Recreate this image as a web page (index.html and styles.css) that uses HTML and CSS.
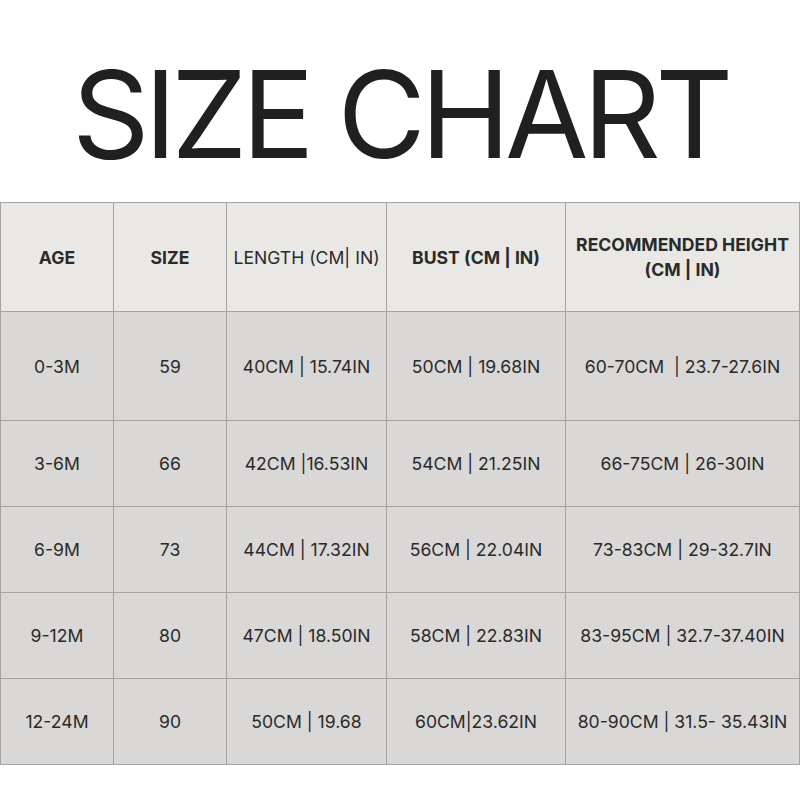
FILE: index.html
```html
<!DOCTYPE html>
<html>
<head>
<meta charset="utf-8">
<link rel="stylesheet" href="styles.css">
</head>
<body>
<h1 class="title">SIZE CHART</h1>
<table class="chart">
  <colgroup>
    <col class="c1"><col class="c2"><col class="c3"><col class="c4"><col class="c5">
  </colgroup>
  <thead>
    <tr class="head">
      <th>AGE</th>
      <th>SIZE</th>
      <th class="light">LENGTH (CM| IN)</th>
      <th>BUST (CM | IN)</th>
      <th>RECOMMENDED HEIGHT<br>(CM | IN)</th>
    </tr>
  </thead>
  <tbody>
    <tr class="tall">
      <td>0-3M</td><td>59</td><td>40CM | 15.74IN</td><td>50CM | 19.68IN</td><td>60-70CM &nbsp;| 23.7-27.6IN</td>
    </tr>
    <tr>
      <td>3-6M</td><td>66</td><td>42CM |16.53IN</td><td>54CM | 21.25IN</td><td>66-75CM | 26-30IN</td>
    </tr>
    <tr>
      <td>6-9M</td><td>73</td><td>44CM | 17.32IN</td><td>56CM | 22.04IN</td><td>73-83CM | 29-32.7IN</td>
    </tr>
    <tr>
      <td>9-12M</td><td>80</td><td>47CM | 18.50IN</td><td>58CM | 22.83IN</td><td>83-95CM | 32.7-37.40IN</td>
    </tr>
    <tr>
      <td>12-24M</td><td>90</td><td>50CM | 19.68</td><td>60CM|23.62IN</td><td>80-90CM | 31.5- 35.43IN</td>
    </tr>
  </tbody>
</table>
</body>
</html>
```

FILE: styles.css
```css
html, body {
  margin: 0;
  padding: 0;
  background: #ffffff;
}
body {
  width: 800px;
  height: 800px;
  font-family: Inter, "Noto Sans", sans-serif;
  color: #222222;
}
.title {
  margin: 0;
  height: 202px;
  padding-top: 54px;
  box-sizing: border-box;
  text-align: center;
  font-family: Inter, sans-serif;
  font-weight: 400;
  font-size: 121px;
  line-height: 121px;
  letter-spacing: -5.5px;
  color: #202020;
}
.chart {
  border-collapse: collapse;
  table-layout: fixed;
  width: 799px;
  margin-left: 0;
}
.c1 { width: 113px; }
.c2 { width: 113px; }
.c3 { width: 160px; }
.c4 { width: 179px; }
.c5 { width: 234px; }
.chart th, .chart td {
  border: 1px solid #a3a3a3;
  text-align: center;
  vertical-align: middle;
  font-size: 17.6px;
  padding: 0 2px;
  color: #2a2a2a;
  white-space: nowrap;
}
.chart th {
  background: #e9e8e5;
  font-weight: 700;
  line-height: 25px;
  height: 108px;
}
.chart th.light {
  font-weight: 400;
}
.chart td {
  background: #d9d8d6;
  height: 85px;
}
.chart tr.tall td {
  height: 108px;
}
```
